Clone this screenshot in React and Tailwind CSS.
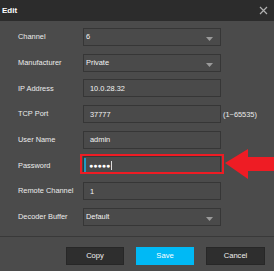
import React from "react";

function Caret() {
  return (
    <svg width="7" height="4" viewBox="0 0 7 4" className="absolute right-[7px] top-[8px]">
      <path d="M0 0 L7 0 L3.5 4 Z" fill="#9a9a9a" />
    </svg>
  );
}

function Row({ label, children }) {
  return (
    <div className="flex items-center h-[18px]">
      <div className="w-[65px] text-[7.4px] text-[#ececec] leading-none">{label}</div>
      {children}
    </div>
  );
}

function Select({ value }) {
  return (
    <div className="relative w-[138px] h-[18px] bg-[#4a4a4a] border border-[#363636] flex items-center pl-[2px] text-[7.4px] text-[#f4f4f4]">
      {value}
      <Caret />
    </div>
  );
}

function Input({ value, children }) {
  return (
    <div className="relative w-[138px] h-[18px] bg-[#4a4a4a] border border-[#363636] flex items-center pl-[6px] text-[7.4px] text-[#f4f4f4]">
      {value}
      {children}
    </div>
  );
}

export default function App() {
  return (
    <div
      className="relative w-[274px] h-[271px] bg-[#4b4b4b] flex flex-col overflow-hidden"
      style={{ fontFamily: '"Liberation Sans", Arial, sans-serif' }}
    >
      <div className="h-[21px] bg-[#2c2c2c] flex items-center justify-between pl-[2px] pr-[6px]">
        <span className="text-[8px] font-bold text-white">Edit</span>
        <svg width="9" height="9" viewBox="0 0 9 9">
          <path d="M1 1 L8 8 M8 1 L1 8" stroke="#b0b0b0" strokeWidth="1.2" />
        </svg>
      </div>
      <div className="flex flex-col gap-[7.7px] pl-[18px] pt-[7px]">
        <Row label="Channel"><Select value="6" /></Row>
        <Row label="Manufacturer"><Select value="Private" /></Row>
        <Row label="IP Address"><Input value="10.0.28.32" /></Row>
        <Row label="TCP Port">
          <Input value="37777" />
          <span className="ml-[2px] text-[7.4px] text-[#ececec]">(1~65535)</span>
        </Row>
        <Row label="User Name"><Input value="admin" /></Row>
        <Row label="Password">
          <div className="relative w-[138px] h-[18px] bg-[#4a4a4a] border border-[#363636] flex items-center pl-[5px]">
            <div className="absolute left-0 top-[1px] bottom-[1px] w-[2px] bg-[#1f9bc4]" />
            <span className="text-[7px] text-white leading-none">●●●●●</span>
            <span className="ml-[1px] w-px h-[9px] bg-[#dddddd]" />
          </div>
        </Row>
        <Row label="Remote Channel"><Input value="1" /></Row>
        <Row label="Decoder Buffer"><Select value="Default" /></Row>
      </div>
      <div className="mt-[10px] h-px bg-[#393939]" />
      <div className="flex justify-end gap-[12px] pr-[9px] pt-[10px]">
        <button className="w-[58px] h-[18px] bg-[#2e2e2e] border border-[#272727] text-[7.6px] text-[#f0f0f0]">Copy</button>
        <button className="w-[58px] h-[18px] bg-[#00b9f5] text-[7.6px] text-white">Save</button>
        <button className="w-[59px] h-[18px] bg-[#2e2e2e] border border-[#272727] text-[7.6px] text-[#f0f0f0]">Cancel</button>
      </div>

      <div className="absolute left-[80px] top-[154px] w-[144px] h-[20px] border-2 border-[#ee1c24]" />
      <svg className="absolute left-[225px] top-[149px]" width="49" height="31" viewBox="0 0 49 31">
        <path d="M0 14 L23 0 L23 8 L49 8 L49 22 L23 22 L23 30 Z" fill="#ee1c24" />
      </svg>
    </div>
  );
}
